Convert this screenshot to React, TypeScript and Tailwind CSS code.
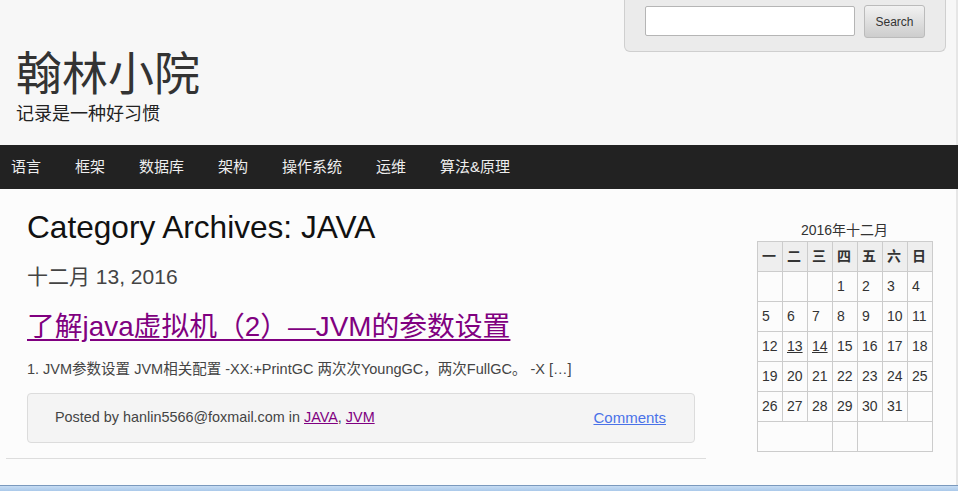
const navItems = ['语言', '框架', '数据库', '架构', '操作系统', '运维', '算法&原理'];

const weekDays = ['一', '二', '三', '四', '五', '六', '日'];

// December 2016 starts on Thursday
const weeks: (number | null)[][] = [
    [null, null, null, 1, 2, 3, 4],
    [5, 6, 7, 8, 9, 10, 11],
    [12, 13, 14, 15, 16, 17, 18],
    [19, 20, 21, 22, 23, 24, 25],
    [26, 27, 28, 29, 30, 31, null],
];

const linkedDays = [13, 14];

const App = () => {
    return (
        <div className="w-[958px] h-[491px] overflow-hidden flex flex-col font-['Liberation_Sans','Noto_Sans_CJK_SC',sans-serif] text-[#333]">
            {/* Header with site title and search */}
            <header className="h-[145px] shrink-0 flex justify-between bg-[#f7f7f7] border-r-2 border-[#e6e6e6]">
                <div className="pl-4 pt-[50px]">
                    <h1 className="text-[46px] leading-[48px] text-[#333] font-normal">翰林小院</h1>
                    <p className="mt-[6px] text-[18px] leading-[20px] text-[#222]">记录是一种好习惯</p>
                </div>
                <div className="self-start mr-[10px] w-[322px] h-[52px] flex items-start gap-[9px] pl-[20px] pt-[5px] bg-[#ebebeb] border border-t-0 border-[#cfcfcf] rounded-b-[6px]">
                    <input
                        type="text"
                        className="mt-[1px] w-[210px] h-[30px] bg-white border border-[#b5b5b5] rounded-[2px] outline-none"
                    />
                    <button className="w-[61px] h-[33px] text-[12px] text-[#333] border border-[#bbb] rounded-[3px] bg-gradient-to-b from-[#f2f2f2] to-[#cdcdcd]">
                        Search
                    </button>
                </div>
            </header>

            {/* Navigation bar */}
            <nav className="h-[44px] shrink-0 bg-[#222] flex items-center gap-[34px] pl-[11px]">
                {navItems.map((item) => (
                    <span key={item} className="text-[15px] leading-[20px] text-[#eee]">
                        {item}
                    </span>
                ))}
            </nav>

            {/* Content area */}
            <div className="flex-1 flex bg-[#fcfcfc] border-r-2 border-[#e6e6e6]">
                <main className="ml-[6px] w-[700px]">
                    <div className="pl-[21px] pr-[11px] pt-[20px]">
                        <h2 className="text-[31.6px] leading-[36px] text-[#111]">Category Archives: JAVA</h2>
                        <p className="mt-[20px] text-[21px] leading-[24px] text-[#444]">十二月 13, 2016</p>
                        <a href="#" className="block mt-[21px] text-[27.8px] leading-[34px] text-[#800080] underline underline-offset-[3px]">
                            了解java虚拟机（2）—JVM的参数设置
                        </a>
                        <p className="mt-[15px] text-[14.5px] leading-[20px] text-[#444]">
                            1. JVM参数设置 JVM相关配置 -XX:+PrintGC 两次次YoungGC，两次FullGC。 -X […]
                        </p>
                        <div className="mt-[14px] h-[50px] flex items-center justify-between pl-[27px] pr-[28px] bg-[#f4f4f4] border border-[#dcdcdc] rounded-[4px] text-[14.4px] text-[#444]">
                            <span>
                                Posted by hanlin5566@foxmail.com in{' '}
                                <a href="#" className="text-[#800080] underline">JAVA</a>,{' '}
                                <a href="#" className="text-[#800080] underline">JVM</a>
                            </span>
                            <a href="#" className="text-[15px] text-[#4a72e8] underline">Comments</a>
                        </div>
                    </div>
                    <div className="mt-[15px] border-t border-[#dddddd]" />
                </main>

                {/* Sidebar calendar */}
                <aside className="ml-[51px] w-[175px] pt-[31px]">
                    <div className="text-center text-[14px] leading-[21px] text-[#333]">2016年十二月</div>
                    <table className="w-[175px] border-collapse table-fixed text-[14px] text-[#333]">
                        <thead>
                            <tr>
                                {weekDays.map((d) => (
                                    <th key={d} className="w-[25px] h-[30px] p-0 pl-[4px] text-left font-bold bg-[#eee] border border-[#ccc]">
                                        {d}
                                    </th>
                                ))}
                            </tr>
                        </thead>
                        <tbody>
                            {weeks.map((week, i) => (
                                <tr key={i}>
                                    {week.map((day, j) => (
                                        <td key={j} className="h-[30px] p-0 pl-[4px] border border-[#ccc]">
                                            {day && linkedDays.includes(day) ? (
                                                <a href="#" className="underline">{day}</a>
                                            ) : (
                                                day
                                            )}
                                        </td>
                                    ))}
                                </tr>
                            ))}
                            <tr>
                                <td colSpan={3} className="h-[30px] border border-[#ccc]"></td>
                                <td className="h-[30px] border border-[#ccc]"></td>
                                <td colSpan={3} className="h-[30px] border border-[#ccc]"></td>
                            </tr>
                        </tbody>
                    </table>
                </aside>
            </div>

            {/* Taskbar strip at the bottom */}
            <div className="h-[6px] shrink-0 border-t border-[#7a99bd] bg-gradient-to-b from-[#c6dcf3] to-[#aac9ea]" />
        </div>
    );
};

export default App;
